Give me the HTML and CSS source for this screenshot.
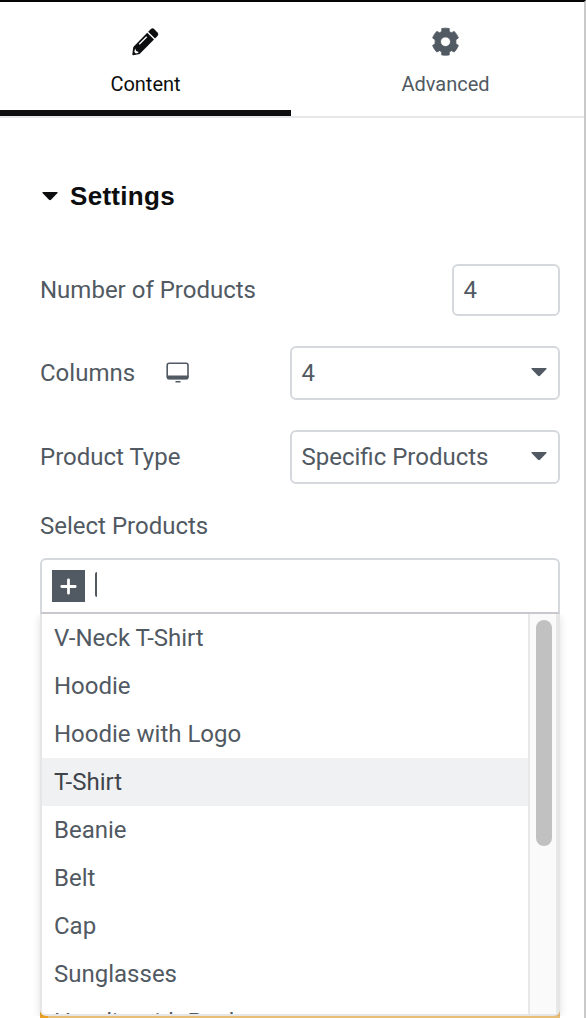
FILE: index.html
```html
<!DOCTYPE html>
<html lang="en">
<head>
<meta charset="utf-8">
<title>Settings</title>
<link rel="stylesheet" href="styles.css">
</head>
<body>
<main class="panel">
  <nav class="tabs">
    <a class="tab tab-active">
      <svg class="tab-icon" width="28" height="30" viewBox="0 0 28 30">
        <path d="M18.700 2.200Q20.500.5 22.300 2.200l3.200 3.200q1.700 1.800 0 3.600l-2.500 2.500L16.200 4.700z" fill="#0c0d0e"/>
        <path d="M15.200 5.700l6.800 6.800L7.600 26.900l-6.300 1.300Q.3 28.200.3 27.400l1-7.500z" fill="#0c0d0e"/>
        <path d="M7.200 17.300l7.500-7.500" fill="none" stroke="#fff" stroke-width="1.300"/>
        <path d="M3.100 21.600l1.200 2.500 2.500 1-.9 1-2 .4-1.600-1.600z" fill="#fff"/>
      </svg>
      <span>Content</span>
    </a>
    <a class="tab tab-advanced">
      <svg class="tab-icon" width="28" height="30" viewBox="0 0 28 30">
        <path transform="translate(-1.580 0) scale(1.040 1)" fill="#515962" fill-rule="evenodd" stroke="#515962" stroke-width=".8" stroke-linejoin="round" d="M10.900 1.500Q14.500.8 18.100 1.500V4.500l2.100 1.200 2.700-1.300Q25.500 7.100 26.900 10.900L24.500 12.700V16.700L26.900 18.500Q25.500 22.300 22.900 25L20.200 23.700 18.100 24.900V27.900Q14.500 28.600 10.900 27.900V24.900L8.800 23.700 6.100 25Q3.500 22.300 2.100 18.500L4.500 16.700V12.700L2.100 10.900Q3.500 7.100 6.100 4.400L8.800 5.700 10.900 4.500zM14.500 9.900a4.800 4.800 0 1 0 0 9.600 4.800 4.800 0 0 0 0-9.600z"/>
      </svg>
      <span>Advanced</span>
    </a>
  </nav>
  <section class="section">
    <h2 class="heading">
      <svg class="caret" width="16" height="9" viewBox="0 0 16 9"><path d="M1 0h14q1 0 .5 1L9 7.800q-1 .9-2 0L.5 1Q0 0 1 0z" fill="currentColor"/></svg>
      Settings
    </h2>
    <div class="row row-number">
      <label>Number of Products</label>
      <div class="field field-number">4</div>
    </div>
    <div class="row row-select">
      <label>Columns</label>
      <svg class="device" width="24" height="22" viewBox="0 0 24 22">
        <rect x="1.200" y="1.200" width="20.800" height="15.300" rx="2" fill="none" stroke="#515962" stroke-width="1.600"/>
        <path d="M1 13.600h21.400v2.400q0 1.600-1.600 1.600H2.600Q1 17.600 1 16zM9.500 19h5v1.500h-5z" fill="#515962"/>
      </svg>
      <div class="field field-select">4
        <svg class="caret" width="16" height="9" viewBox="0 0 16 9"><path d="M1 0h14q1 0 .5 1L9 7.800q-1 .9-2 0L.5 1Q0 0 1 0z" fill="currentColor"/></svg>
      </div>
    </div>
    <div class="row row-select">
      <label>Product Type</label>
      <div class="field field-select">Specific Products
        <svg class="caret" width="16" height="9" viewBox="0 0 16 9"><path d="M1 0h14q1 0 .5 1L9 7.800q-1 .9-2 0L.5 1Q0 0 1 0z" fill="currentColor"/></svg>
      </div>
    </div>
    <label class="picker-label">Select Products</label>
    <div class="picker">
      <div class="picker-box">
        <span class="add"><svg width="17" height="17" viewBox="0 0 17 17"><path d="M8.500 1.800v13.400M1.800 8.500h13.400" stroke="#fff" stroke-width="2.800" stroke-linecap="round"/></svg></span>
        <span class="cursor"></span>
      </div>
      <div class="notice"></div>
      <div class="dropdown">
        <ul class="options">
          <li>V-Neck T-Shirt</li>
          <li>Hoodie</li>
          <li>Hoodie with Logo</li>
          <li class="hovered">T-Shirt</li>
          <li>Beanie</li>
          <li>Belt</li>
          <li>Cap</li>
          <li>Sunglasses</li>
          <li>Hoodie with Pocket</li>
        </ul>
        <div class="track"><div class="thumb"></div></div>
      </div>
    </div>
  </section>
</main>
</body>
</html>
```
FILE: styles.css
```css
* { box-sizing: border-box; }
body { margin: 0; background: #fff; font-family: Roboto, sans-serif; font-size: 24px; line-height: 28px; color: #515962; }
.panel { height: 1018px; overflow: hidden; border-top: 2px solid #050505; border-right: 2px solid #c9c9c9; }
.tabs { display: flex; height: 116px; border-bottom: 2px solid #e6e8ea; }
.tab { display: flex; flex-direction: column; align-items: center; padding-top: 25px; font-size: 20px; line-height: 24px; }
.tab-icon { margin-bottom: 15px; }
.tab-active { width: 291px; color: #0c0d0e; border-bottom: 6px solid #0c0d0e; }
.tab-advanced { flex: 1; padding-left: 16px; }
.section { padding: 62px 24px 0 40px; }
.heading { display: flex; align-items: center; gap: 12px; height: 32px; margin: 0 0 52px; padding-left: 2px; font: bold 26px/32px "Liberation Sans", Arial, sans-serif; letter-spacing: .3px; color: #0c0d0e; }
.caret { flex: none; }
.row { display: flex; align-items: center; }
.row-number { height: 52px; margin-bottom: 30px; }
.row-select { height: 54px; margin-bottom: 30px; }
.field { display: flex; align-items: center; justify-content: space-between; height: 100%; margin-left: auto; padding: 0 11.5px 0 9.5px; border: 2px solid #d5d8dc; border-radius: 6px; }
.field .caret { margin-bottom: 1px; }
.field-number { width: 108px; }
.field-select { width: 270px; }
.device { margin-left: 31px; }
.picker-label { display: block; margin-top: -2px; }
.picker { position: relative; margin-top: 18px; }
.picker-box { display: flex; align-items: center; height: 56px; padding-left: 10px; border: 2px solid #d5d8dc; border-bottom-color: #c8c8ce; border-radius: 6px 6px 0 0; }
.add { display: flex; align-items: center; justify-content: center; width: 33px; height: 32px; background: #515962; }
.cursor { width: 2px; height: 25px; margin: 0 0 3px 10px; background: #515962; border-radius: 2px 0 0 2px; }
.notice { height: 60px; margin-top: 394px; background: #e8bd76; border-left: 8px solid #eca123; }
.dropdown { position: absolute; top: 56px; left: 0; display: flex; width: 520px; height: 402px; overflow: hidden; background: #fff; border: 2px solid #e6e6e6; border-top: 0; border-radius: 0 0 6px 6px; }
.picker::after { content: ""; position: absolute; top: 56px; left: 0; width: 520px; height: 402px; border-radius: 0 0 6px 6px; box-shadow: 0 3px 8px rgba(0, 0, 0, .13); pointer-events: none; clip-path: inset(0 -12px 0 -12px); }
.options { flex: 1; margin: 0; padding: 0; list-style: none; }
.options li { height: 48px; padding: 10px 12px; }
.options .hovered { background: #f0f1f3; color: #3f444b; }
.track { width: 30px; padding: 6px 6px 0; background: #fafafa; border-left: 2px solid #e8e8e8; border-right: 2px solid #e8e8e8; }
.thumb { width: 16px; height: 226px; border-radius: 8px; background: #c1c1c1; }
```
